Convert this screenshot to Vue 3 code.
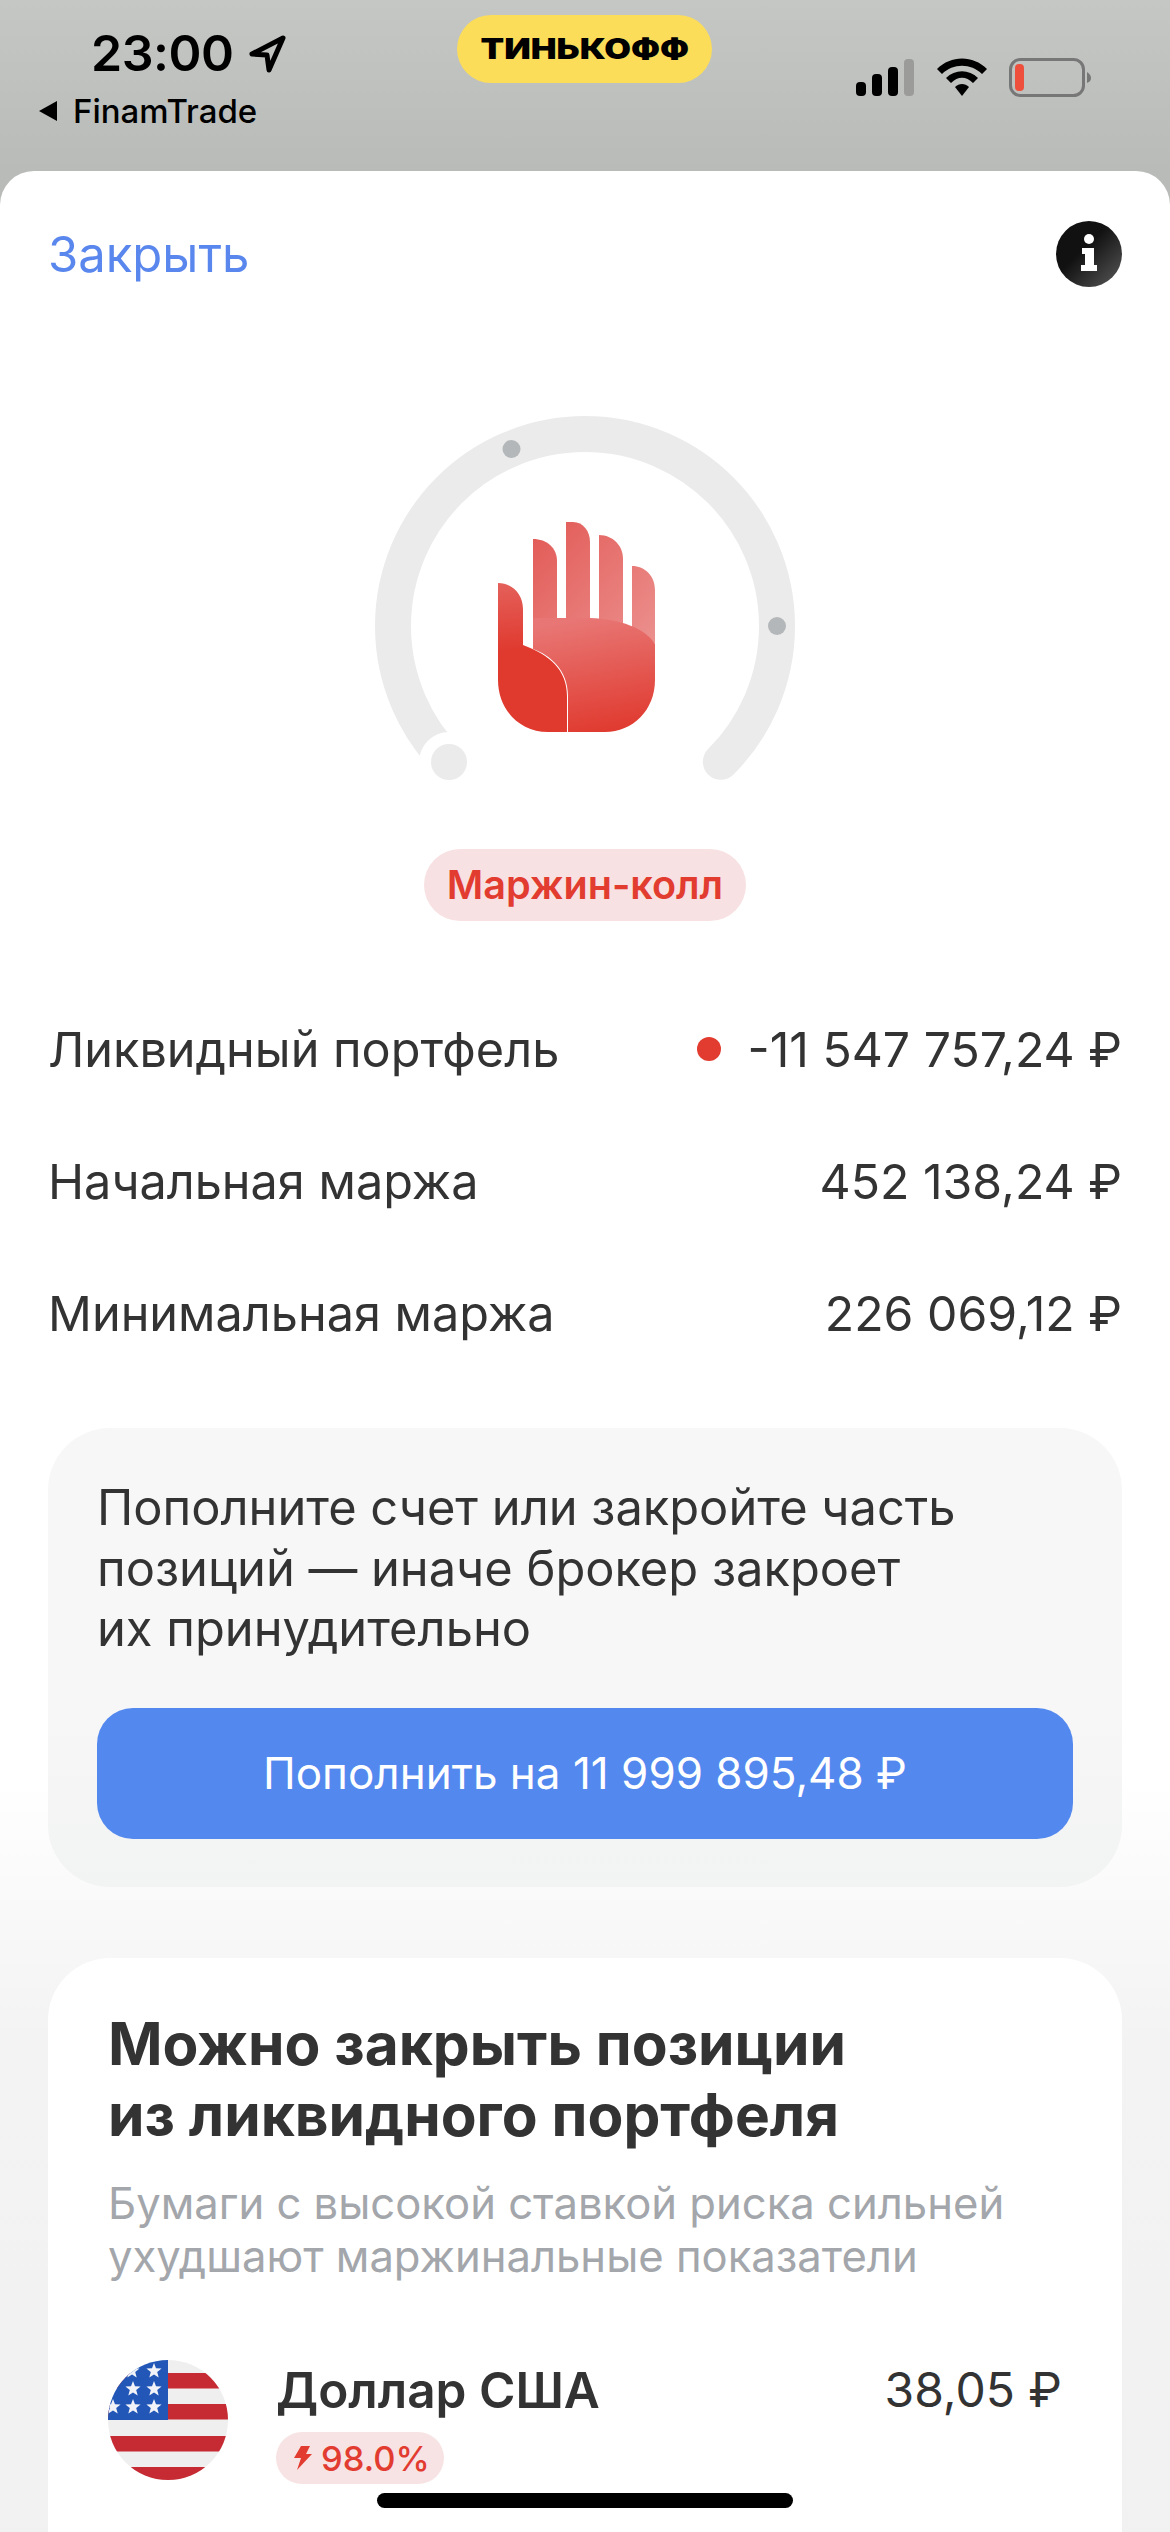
<script setup>
const rows = [
  { label: 'Ликвидный портфель', value: '-11 547 757,24 ₽', alert: true },
  { label: 'Начальная маржа', value: '452 138,24 ₽', alert: false },
  { label: 'Минимальная маржа', value: '226 069,12 ₽', alert: false },
]
const stripes = [2374, 2405, 2437, 2468]
const stars = [[154, 2372], [132, 2372], [133, 2390], [154, 2390], [133, 2408], [154, 2408], [113, 2408]]
const starPath = (x, y) => {
  const pts = []
  for (let i = 0; i < 10; i++) {
    const r = i % 2 ? 3.4 : 8
    const a = -Math.PI / 2 + (i * Math.PI) / 5
    pts.push(`${(x + r * Math.cos(a)).toFixed(1)},${(y + r * Math.sin(a)).toFixed(1)}`)
  }
  return pts.join(' ')
}
</script>

<template>
  <div class="screen">
    <header class="status">
      <div class="status-left">
        <div class="time-row">
          <span class="time">23:00</span>
          <svg class="loc" viewBox="0 0 44 40" width="44" height="40">
            <path d="M38 5 L7 21 L22 22 L24 37 Z" fill="none" stroke="#000" stroke-width="5" stroke-linejoin="round" />
          </svg>
        </div>
        <div class="back-row">
          <svg viewBox="0 0 20 22" width="20" height="22"><path d="M19 1 V21 L1 11 Z" fill="#000" /></svg>
          <span class="back">FinamTrade</span>
        </div>
      </div>
      <div class="brand"><span>ТИНЬКОФФ</span></div>
      <div class="status-right">
        <svg viewBox="856 58 236 39" width="236" height="39">
          <rect x="856" y="82" width="10" height="14" rx="4" fill="#000" />
          <rect x="872" y="74" width="10" height="22" rx="4" fill="#000" />
          <rect x="888" y="67" width="10" height="29" rx="4" fill="#000" />
          <rect x="904" y="59" width="10" height="37" rx="4" fill="#9b9c9a" />
          <path d="M937 69 C951 55 973 55 987 69 L982 74 C971 63 953 63 942 74 Z" fill="#000" />
          <path d="M946 78 C955 69 969 69 978 78 L973 83 C966 76 958 76 951 83 Z" fill="#000" />
          <path d="M955 87 C959 83 965 83 969 87 L962 96 Z" fill="#000" />
          <rect x="1010.5" y="59.5" width="73" height="36" rx="10" fill="none" stroke="#777" stroke-width="3" />
          <rect x="1015" y="64" width="9" height="27" rx="4" fill="#ee4f3c" />
          <path d="M1087 72 C1090 74 1091 76 1091 78 C1091 80 1090 82 1087 83 Z" fill="#777" />
        </svg>
      </div>
    </header>

    <main class="sheet">
      <div class="top">
        <span class="close">Закрыть</span>
        <svg class="info" viewBox="0 0 66 66" width="66" height="66">
          <defs>
            <linearGradient id="infoG" x1="0.1" y1="0.1" x2="1" y2="1">
              <stop offset="0.35" stop-color="#111" />
              <stop offset="1" stop-color="#5a5a5a" />
            </linearGradient>
          </defs>
          <circle cx="33" cy="33" r="33" fill="url(#infoG)" />
          <circle cx="33" cy="18" r="5" fill="#fff" />
          <path d="M26 27 H38 V44 H41 V50 H25 V44 H29 V33 H26 Z" fill="#fff" />
        </svg>
      </div>

      <div class="gauge">
        <svg viewBox="365 410 440 370" width="440" height="370">
          <defs>
            <linearGradient id="fing" gradientUnits="userSpaceOnUse" x1="530" y1="530" x2="660" y2="650">
              <stop offset="0" stop-color="#e25a56" />
              <stop offset="1" stop-color="#ec9391" />
            </linearGradient>
            <linearGradient id="palm" gradientUnits="userSpaceOnUse" x1="590" y1="618" x2="610" y2="732">
              <stop offset="0" stop-color="#e87674" />
              <stop offset="1" stop-color="#e03a2f" />
            </linearGradient>
            <linearGradient id="thumb" gradientUnits="userSpaceOnUse" x1="510" y1="583" x2="515" y2="650">
              <stop offset="0" stop-color="#e4605a" />
              <stop offset="1" stop-color="#e03a2f" />
            </linearGradient>
          </defs>
          <path d="M449.2 761.8 A192 192 0 1 1 720.8 761.8" fill="none" stroke="#ebebeb" stroke-width="36" stroke-linecap="round" />
          <circle cx="449" cy="762" r="30" fill="#fff" />
          <circle cx="449" cy="762" r="18" fill="#ebebeb" />
          <circle cx="511.5" cy="449" r="9" fill="#b4b7b9" />
          <circle cx="777" cy="626" r="9" fill="#b4b7b9" />
          <path d="M533 539 C547 539 557 548 557 561 L557 618 L533 618 Z" fill="url(#fing)" />
          <path d="M566 522 L573 522 C583 522 590 531 590 542 L590 618 L566 618 Z" fill="url(#fing)" />
          <path d="M599 535 C613 535 623 546 623 558 L623 625 C615 622 607 620 599 619 Z" fill="url(#fing)" />
          <path d="M632 566 C645 566 655 576 655 590 L655 644 C649 637 641 632 632 628 Z" fill="url(#fing)" />
          <path d="M533 618 L590 618 C620 619 645 628 655 644 L655 680 C655 710 633 732 605 732 L568 732 L568 696 C568 670 550 655 533 649 Z" fill="url(#palm)" />
          <path d="M498 583 C512 583 523 594 523 609 L523 645 C550 655 567 670 567 696 L567 732 L548 732 C520 732 498 710 498 680 Z" fill="url(#thumb)" />
        </svg>
      </div>

      <div class="badge-row"><span class="badge">Маржин-колл</span></div>

      <section class="rows">
        <div v-for="r in rows" :key="r.label" class="row">
          <span>{{ r.label }}</span>
          <span class="value">
            <i v-if="r.alert" class="dot"></i>
            {{ r.value }}
          </span>
        </div>
      </section>

      <section class="notice">
        <p>Пополните счет или закройте часть<br />позиций — иначе брокер закроет<br />их принудительно</p>
        <button class="cta">Пополнить на 11 999 895,48 ₽</button>
      </section>

      <div class="lower">
        <section class="card">
          <h2>Можно закрыть позиции<br />из ликвидного портфеля</h2>
          <p class="sub">Бумаги с высокой ставкой риска сильней<br />ухудшают маржинальные показатели</p>
          <div class="asset">
            <svg class="flag" viewBox="108 2361 120 120" width="120" height="120">
              <defs><clipPath id="flagC"><circle cx="168" cy="2421" r="60" /></clipPath></defs>
              <g clip-path="url(#flagC)">
                <rect x="108" y="2361" width="120" height="120" fill="#efefef" />
                <rect v-for="s in stripes" :key="s" x="108" :y="s" width="120" height="15.5" fill="#c62a33" />
                <rect x="108" y="2361" width="60" height="60" fill="#2257b8" />
                <polygon v-for="(p, i) in stars" :key="i" :points="starPath(p[0], p[1])" fill="#f1f3f8" />
              </g>
            </svg>
            <div class="asset-main">
              <div class="asset-name">Доллар США</div>
              <span class="tag">
                <svg viewBox="0 0 20 24" width="20" height="24"><path d="M9 0 H18 L14 8 H20 L5 24 L9 12 H2 Z" fill="#e23c30" /></svg>
                98.0%
              </span>
            </div>
            <div class="price">38,05 ₽</div>
          </div>
        </section>
      </div>
      <div class="home"></div>
    </main>
  </div>
</template>

<style>
html, body { margin: 0; padding: 0; background: #fff; }
</style>

<style scoped>
.screen {
  width: 1170px;
  height: 2532px;
  overflow: hidden;
  display: flex;
  flex-direction: column;
  background: linear-gradient(#c5c7c4, #b9bbb8 171px);
  font-family: Inter, "Liberation Sans", sans-serif;
  color: #333;
}
.status {
  height: 171px;
  flex: none;
  box-sizing: border-box;
  position: relative;
  padding: 0 0 0 38px;
}
.status-left { padding-top: 26px; }
.time-row { display: flex; align-items: center; gap: 12px; padding-left: 53px; height: 54px; }
.time { font-size: 50px; font-weight: 600; color: #000; letter-spacing: -0.5px; line-height: 54px; }
.back-row { display: flex; align-items: center; gap: 15px; margin-top: 13px; height: 36px; }
.back { font-size: 33px; font-weight: 500; color: #000; line-height: 36px; }
.brand {
  position: absolute;
  left: 457px;
  top: 15px;
  width: 255px;
  height: 68px;
  border-radius: 34px;
  background: #fcdd59;
  display: flex;
  align-items: center;
  justify-content: center;
}
.brand span { font-size: 28px; font-weight: 900; color: #000; transform: scaleX(1.23); }
.status-right { position: absolute; left: 856px; top: 58px; display: flex; }
.sheet {
  flex: 1;
  position: relative;
  background: linear-gradient(#fff 1610px, #f3f3f3 1870px, #f1f1f1);
  border-radius: 34px 34px 0 0;
  display: flex;
  flex-direction: column;
}
.top {
  display: flex;
  justify-content: space-between;
  align-items: center;
  padding: 50px 48px 0;
  height: 66px;
}
.close { font-size: 49px; color: #5a87ed; }
.gauge { display: flex; justify-content: center; margin-top: 123px; height: 370px; }
.badge-row { display: flex; justify-content: center; margin-top: 69px; }
.badge {
  height: 72px;
  width: 322px;
  border-radius: 36px;
  background: #f8e1e2;
  color: #e23c30;
  font-size: 39.6px;
  font-weight: 600;
  line-height: 72px;
  text-align: center;
}
.rows { margin-top: 62px; padding: 0 48px; }
.row {
  height: 132px;
  display: flex;
  justify-content: space-between;
  align-items: center;
  font-size: 48.6px;
}
.value { display: flex; align-items: center; white-space: nowrap; font-size: 48.2px; }
.dot { width: 24px; height: 24px; border-radius: 50%; background: #e23c30; margin-right: 27px; }
.notice {
  margin: 49px 48px 0;
  height: 459px;
  box-sizing: border-box;
  padding: 50px 49px 0;
  background: linear-gradient(#f7f7f7 280px, #f2f3f3);
  border-radius: 62px;
}
.notice p { margin: 0; font-size: 48.8px; line-height: 60.5px; }
.cta {
  display: block;
  width: 100%;
  height: 131px;
  margin-top: 48px;
  border: 0;
  border-radius: 36px;
  background: #5388ef;
  color: #fff;
  font: 400 44px Inter, "Liberation Sans", sans-serif;
}
.lower {
  flex: 1;
  padding: 0 48px;
}
.card {
  margin-top: 71px;
  height: 700px;
  box-sizing: border-box;
  background: #fff;
  border-radius: 62px;
  padding: 50px 60px;
}
.card h2 { margin: 0; font-size: 58.6px; font-weight: 700; line-height: 71px; }
.sub { margin: 27px 0 0; font-size: 43.6px; line-height: 53px; color: #a3a6ab; }
.asset { display: flex; margin-top: 77px; }
.flag { flex: none; }
.asset-main { margin-left: 48px; flex: 1; }
.asset-name { font-size: 49.5px; font-weight: 600; line-height: 60px; }
.tag {
  display: inline-flex;
  align-items: center;
  gap: 9px;
  height: 52px;
  margin-top: 12px;
  padding: 0 14px 0 16px;
  border-radius: 26px;
  background: #f8e3e4;
  color: #e23c30;
  font-size: 34.5px;
  font-weight: 500;
}
.price { font-size: 48px; line-height: 60px; }
.home {
  position: absolute;
  left: 377px;
  top: 2322px;
  width: 416px;
  height: 15px;
  border-radius: 8px;
  background: #000;
}
</style>
